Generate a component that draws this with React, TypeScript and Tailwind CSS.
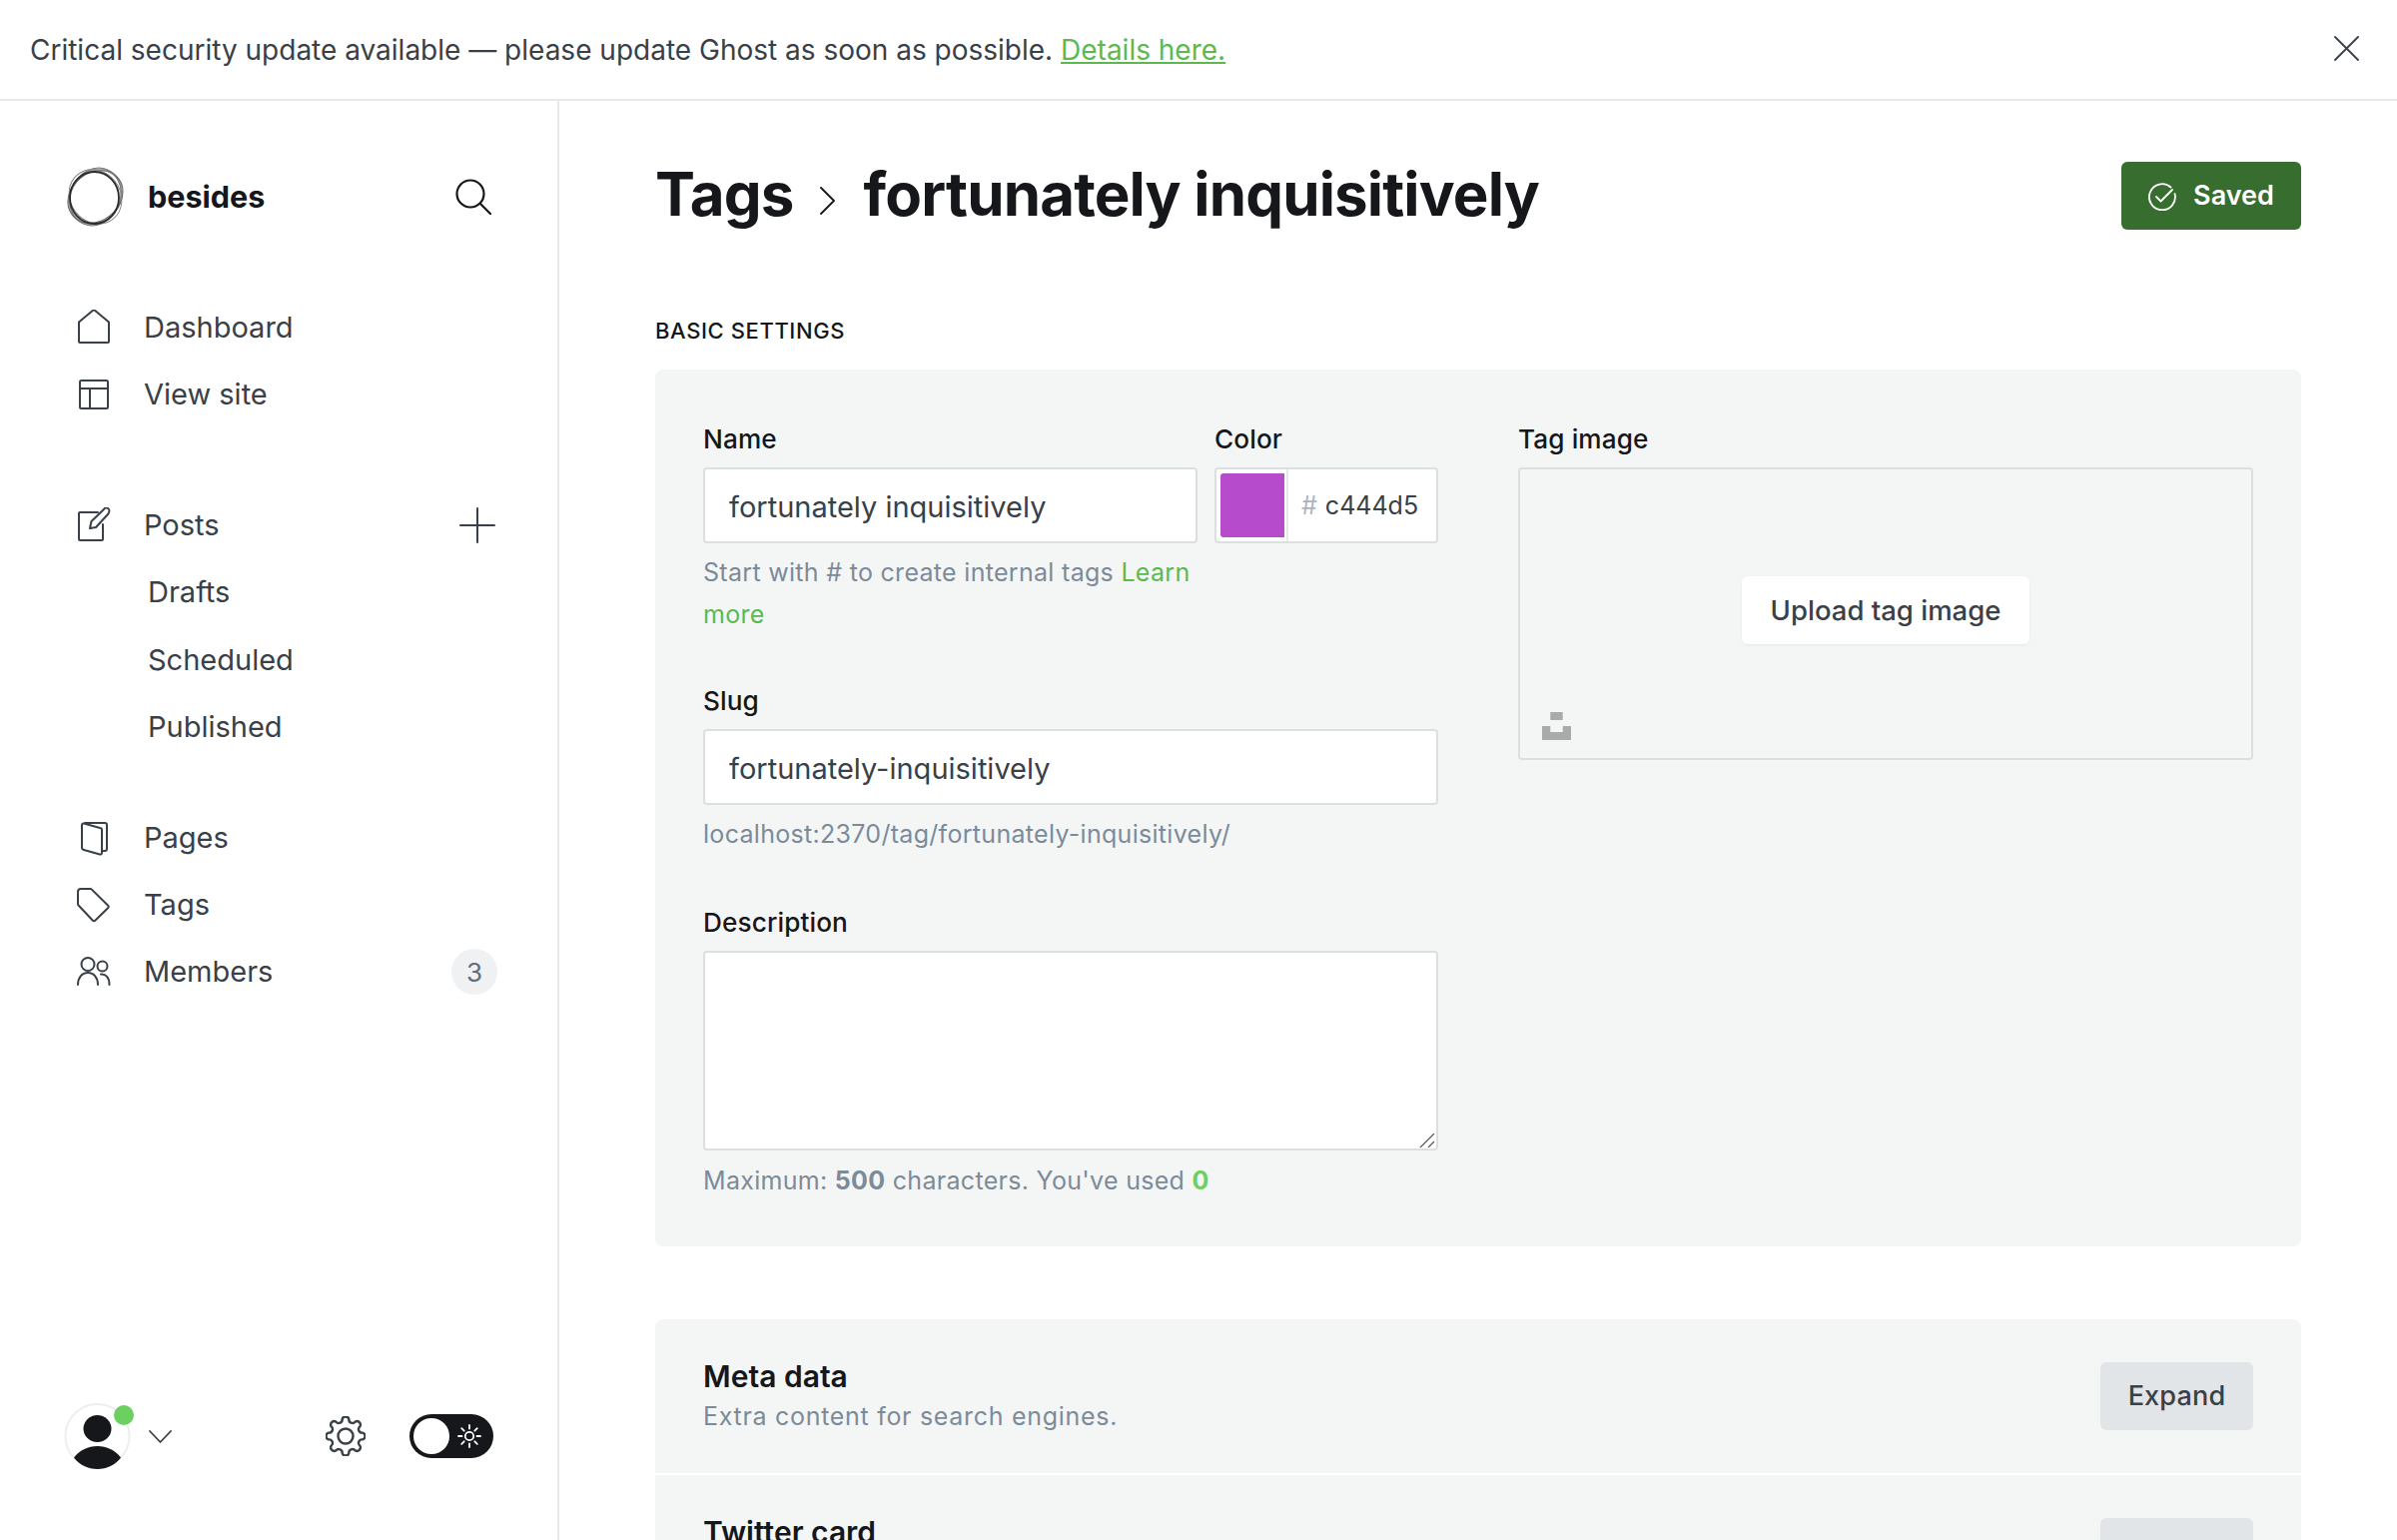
import type { ReactNode } from 'react';

// wavy 8 tooth outline for the settings cog
function gearPath() {
  const pts: string[] = [];
  for (let i = 0; i < 16; i++) {
    const a = ((i * 22.5 - 101.25) * Math.PI) / 180;
    const x = (20 + 17.3 * Math.cos(a)).toFixed(2);
    const y = (20 + 17.3 * Math.sin(a)).toFixed(2);
    if (i === 0) pts.push(`M${x} ${y}`);
    else pts.push(`A3.5 3.5 0 0 ${i % 2 === 1 ? 1 : 0} ${x} ${y}`);
  }
  return pts.join(' ') + ' A3.5 3.5 0 0 0 ' + pts[0].slice(1) + 'Z';
}

function Logo() {
  return (
    <svg className="w-[61px] h-[60px] shrink-0" viewBox="0 0 61 60" fill="none">
      <ellipse cx="30.500" cy="30" rx="24.500" ry="29" stroke="#a8a8a8" strokeWidth="2.400" transform="rotate(38 30.500 30)" />
      <ellipse cx="30.500" cy="30" rx="25" ry="29.500" stroke="#777777" strokeWidth="1" transform="rotate(24 30.500 30)" />
      <ellipse cx="30.500" cy="30" rx="24" ry="29.500" stroke="#666666" strokeWidth="1" transform="rotate(52 30.500 30)" />
      <ellipse cx="30.500" cy="30" rx="25" ry="28.500" stroke="#888888" strokeWidth="1" transform="rotate(-38 30.500 30)" />
      <ellipse cx="29.500" cy="31" rx="24.500" ry="26" stroke="#2a2a2a" strokeWidth="1.800" />
    </svg>
  );
}

function NavIcon({ children }: { children: ReactNode }) {
  return (
    <svg
      className="w-9 h-9 shrink-0 text-[#394047]"
      viewBox="0 0 36 36"
      fill="none"
      stroke="currentColor"
      strokeWidth={2}
      strokeLinecap="round"
      strokeLinejoin="round"
    >
      {children}
    </svg>
  );
}

function NavRow({ icon, label, right }: { icon: ReactNode; label: string; right?: ReactNode }) {
  return (
    <div className="flex items-center h-[67.2px]">
      <NavIcon>{icon}</NavIcon>
      <span className="ml-8 text-[29px] text-[#394047]">{label}</span>
      {right && <div className="ml-auto flex items-center">{right}</div>}
    </div>
  );
}

function SubRow({ label }: { label: string }) {
  return <div className="flex items-center h-[67.2px] pl-[72px] text-[29px] text-[#394047]">{label}</div>;
}

function Sidebar() {
  return (
    <aside className="w-[560px] shrink-0 border-r-2 border-[#e6e8e9] flex flex-col h-full">
      <div className="flex items-center pl-[65px] pr-[66px] pt-[66px]">
        <Logo />
        <span className="ml-[22px] text-[30.500px] font-bold text-[#15171a]">besides</span>
        <svg className="ml-auto w-9 h-9" viewBox="0 0 36 36" fill="none" stroke="#15171a" strokeWidth="2.200" strokeLinecap="round">
          <circle cx="15" cy="15" r="13.500" />
          <path d="M25 25 35 35" />
        </svg>
      </div>

      <nav className="pl-[76px] pr-[60px] mt-[67px]">
        <NavRow label="Dashboard" icon={<path d="M3 32V12.500L18 0l15 12.500V32a1 1 0 0 1-1 1H4a1 1 0 0 1-1-1Z" />} />
        <NavRow
          label="View site"
          icon={
            <>
              <rect x="4" y="4" width="28" height="28" rx="1.500" />
              <path d="M4 12h28M14 12v20" />
            </>
          }
        />
        <div className="mt-[64px]">
          <NavRow
            label="Posts"
            icon={
              <>
                <path d="M22 6H4a1 1 0 0 0-1 1v26a1 1 0 0 0 1 1h22a1 1 0 0 0 1-1V18" transform="translate(0 -1)" />
                <path d="M14 21l1.500-7L28 2a2.800 2.800 0 0 1 5 3 4 4 0 0 1-1 2L20 20Z" />
              </>
            }
            right={
              <svg className="w-9 h-9 mr-[2px]" viewBox="0 0 36 36" stroke="#394047" strokeWidth="2" strokeLinecap="round">
                <path d="M18 1v34M1 18h34" />
              </svg>
            }
          />
          <SubRow label="Drafts" />
          <SubRow label="Scheduled" />
          <SubRow label="Published" />
        </div>
        <div className="mt-[44px]">
          <NavRow
            label="Pages"
            icon={
              <>
                <path d="M9 3h20a2 2 0 0 1 2 2v24a2 2 0 0 1-2 2h-3" />
                <path d="M6 5a1.500 1.500 0 0 1 2-1.500L24 8a2 2 0 0 1 2 2v23a1.500 1.500 0 0 1-2 1.500L8 30a2.500 2.500 0 0 1-2-2.500Z" />
              </>
            }
          />
          <NavRow
            label="Tags"
            icon={<path d="M2 5a3 3 0 0 1 3-3h9.500a2 2 0 0 1 1.400.6L32 18.500a2 2 0 0 1 0 2.800L19.500 33.500a2 2 0 0 1-2.800 0L2.600 18.500a2 2 0 0 1-.6-1.400Z" />}
          />
          <NavRow
            label="Members"
            icon={
              <>
                <circle cx="12" cy="10.500" r="6.500" />
                <path d="M2 31c0-7 4-12 10-12s10 5 10 12" />
                <circle cx="26.500" cy="12.500" r="5" />
                <path d="M25 20.500c5-.5 8.500 3.500 8.500 10.500" />
              </>
            }
            right={
              <span className="w-[46px] h-[46px] rounded-full bg-[#eff1f3] text-[#626d79] text-[26px] flex items-center justify-center">
                3
              </span>
            }
          />
        </div>
      </nav>

      <div className="mt-auto flex items-center pl-[64px] pr-[64px] pb-[71px]">
        <div className="relative w-[67px] h-[66px] shrink-0">
          <svg className="w-[67px] h-[66px]" viewBox="0 0 67 66">
            <circle cx="33.500" cy="33" r="32" fill="#fff" stroke="#eeeeee" strokeWidth="2" />
            <ellipse cx="33.500" cy="25.500" rx="14" ry="13.500" fill="#15171a" />
            <path d="M10 54.500C16 47 24 43 33.500 43s17.500 4 23.500 11.500C51 62 43 66 33.500 66S16 62 10 54.500Z" fill="#15171a" />
          </svg>
          <span className="absolute top-[2px] -right-[3px] w-5 h-5 rounded-full bg-[#6bd05f]" />
        </div>
        <svg className="ml-[18px] w-[23px] h-[13px]" viewBox="0 0 23 13" fill="none" stroke="#394047" strokeWidth="1.800" strokeLinecap="round" strokeLinejoin="round">
          <path d="M1 1l10.500 11L22 1" />
        </svg>
        <svg className="ml-auto w-10 h-10" viewBox="0 0 40 40" fill="none" stroke="#394047" strokeWidth="2.400" strokeLinejoin="round">
          <path d={gearPath()} />
          <circle cx="20" cy="20" r="7.500" />
        </svg>
        <div className="ml-[44px] w-[84px] h-11 rounded-full bg-[#15171a] flex items-center justify-between pl-1 pr-3">
          <span className="w-9 h-9 rounded-full bg-white" />
          <svg className="w-6 h-6" viewBox="0 0 24 24" fill="none" stroke="#fff" strokeWidth="1.800" strokeLinecap="round">
            <circle cx="12" cy="12" r="4.200" />
            <path d="M12 1v3.500M12 19.500V23M1 12h3.500M19.500 12H23M4.200 4.200l2.500 2.500M17.300 17.300l2.500 2.500M4.200 19.800l2.500-2.500M17.300 6.700l2.500-2.500" />
          </svg>
        </div>
      </div>
    </aside>
  );
}

function Label({ children }: { children: ReactNode }) {
  return <div className="h-7 leading-7 text-[26.200px] font-medium text-[#15171a] mb-[14px] tracking-[0.1px]">{children}</div>;
}

function Help({ children }: { children: ReactNode }) {
  return <p className="text-[25px] leading-[42px] text-[#7c8b9a] tracking-[0.3px]">{children}</p>;
}

function TextField({ value }: { value: string }) {
  return (
    <input
      defaultValue={value}
      className="w-full h-[76px] px-6 pt-[2px] rounded-[4px] border-2 border-[#dcdfe1] bg-white text-[29px] text-[#394047] outline-none font-[Inter,sans-serif]"
    />
  );
}

function BasicSettings() {
  return (
    <section className="rounded-lg bg-[#f4f6f6] h-[878px] px-12 pt-14 grid grid-cols-[736px_736px] gap-x-[80px]">
      <div>
        <div className="flex gap-[17px]">
          <div className="w-[495px]">
            <Label>Name</Label>
            <TextField value="fortunately inquisitively" />
            <div className="mt-2">
              <Help>
                Start with # to create internal tags <a className="text-[#5db94f]">Learn more</a>
              </Help>
            </div>
          </div>
          <div className="w-[224px]">
            <Label>Color</Label>
            <div className="flex h-[76px] rounded-[4px] border-2 border-[#dcdfe1] bg-white overflow-hidden">
              <div className="w-[72px] shrink-0 border-r-2 border-[#e6e8e9] pl-1 py-1">
                <div className="w-[64px] h-full bg-[#b64bcc] rounded-l-[3px]" />
              </div>
              <div className="flex items-center pl-[13px] pt-[2px] text-[25px] text-[#394047]">
                <span className="text-[#abb4be] mr-2">#</span>c444d5
              </div>
            </div>
          </div>
        </div>

        <div className="mt-[52px]">
          <Label>Slug</Label>
          <TextField value="fortunately-inquisitively" />
          <div className="mt-2">
            <Help>localhost:2370/tag/fortunately-inquisitively/</Help>
          </div>
        </div>

        <div className="mt-[54px]">
          <Label>Description</Label>
          <div className="relative">
            <textarea className="block w-full h-[200px] rounded-[4px] border-2 border-[#dcdfe1] bg-white outline-none resize-none" />
            <svg className="absolute right-[3px] bottom-[3px] w-4 h-[14px]" viewBox="0 0 16 14" stroke="#555555" strokeWidth="1.200">
              <path d="M1 14 15 0M9 14l6-6" />
            </svg>
          </div>
          <div className="mt-[9px]">
            <Help>
              Maximum: <b className="font-bold">500</b> characters. You've used{' '}
              <b className="font-bold text-[#6bd05f]">0</b>
            </Help>
          </div>
        </div>
      </div>

      <div>
        <Label>Tag image</Label>
        <div className="relative h-[293px] rounded-[4px] border-2 border-[#dcdfe1] flex items-center justify-center pb-2">
          <button className="h-[68px] px-[29px] pt-[2px] rounded-md bg-white text-[27.500px] font-medium text-[#394047] shadow-[0_1px_3px_rgba(0,0,0,0.06)]">
            Upload tag image
          </button>
          <svg className="absolute left-[22px] bottom-[18px] w-[29px] h-[28px]" viewBox="0 0 28 28" fill="#aaaaaa" preserveAspectRatio="none">
            <path d="M8 0h12v8H8zM0 14h8v6h12v-6h8v14H0z" />
          </svg>
        </div>
      </div>
    </section>
  );
}

function ExpandRow({ title, desc }: { title: string; desc: string }) {
  return (
    <div className="flex items-start justify-between bg-[#f4f6f6] h-[154px] px-12 pt-[43px] first:rounded-t-lg">
      <div>
        <div className="text-[30px] leading-[36px] -mt-[4px] font-semibold text-[#15171a]">{title}</div>
        <div className="mt-[7px] text-[25px] leading-[30px] text-[#7c8b9a] tracking-[0.7px]">{desc}</div>
      </div>
      <button className="w-[153px] h-[68px] pt-[1px] rounded-md bg-[#e2e5e8] text-[27px] font-medium text-[#394047] tracking-[0.2px]">
        Expand
      </button>
    </div>
  );
}

export default function App() {
  return (
    <div className="h-screen overflow-hidden flex flex-col bg-white font-[Inter,sans-serif]">
      <header className="h-[101px] shrink-0 border-b-2 border-[#e6e8e9] flex items-center justify-between pl-[30px] pr-[38px] text-[28px] text-[#394047]">
        <p>
          Critical security update available — please update Ghost as soon as possible.{' '}
          <a className="text-[#5db94f] underline">Details here.</a>
        </p>
        <svg className="w-[25px] h-[25px] -mt-[2px]" viewBox="0 0 25 25" stroke="#394047" strokeWidth="1.800" strokeLinecap="round">
          <path d="M1 1l23 23M24 1 1 24" />
        </svg>
      </header>

      <div className="flex flex-1 min-h-0">
        <Sidebar />
        <main className="flex-1 min-w-0 px-[96px] overflow-hidden">
          <div className="flex items-center justify-between h-[68px] mt-[61px]">
            <h1 className="flex items-center pb-1 text-[60px] font-bold text-[#15171a] tracking-[-0.85px]">
              Tags
              <svg className="ml-[25px] mr-[28px] w-[17px] h-7 mt-[14px]" viewBox="0 0 17 28" fill="none" stroke="#15171a" strokeWidth="1.800" strokeLinecap="round" strokeLinejoin="round">
                <path d="M2 1l13 13L2 27" />
              </svg>
              fortunately inquisitively
            </h1>
            <button className="w-[180px] h-[68px] pt-[1px] rounded-md bg-[#386d30] text-white text-[27px] font-semibold flex items-center justify-center gap-[17px]">
              <svg className="w-7 h-7" viewBox="0 0 28 28" fill="none" stroke="#fff" strokeWidth="1.800" strokeLinecap="round" strokeLinejoin="round">
                <path d="M22.500 4.500A13 13 0 1 0 26.500 11" />
                <path d="M8 14l4.500 4.500L24 7" />
              </svg>
              Saved
            </button>
          </div>

          <h2 className="mt-[86px] mb-[24px] h-[30px] leading-[30px] text-[22px] font-medium text-[#15171a] tracking-[0.6px]">
            BASIC SETTINGS
          </h2>

          <BasicSettings />

          <div className="mt-[73px] flex flex-col gap-[2px]">
            <ExpandRow title="Meta data" desc="Extra content for search engines." />
            <ExpandRow title="Twitter card" desc="Customize structured data for Twitter." />
          </div>
        </main>
      </div>
    </div>
  );
}
